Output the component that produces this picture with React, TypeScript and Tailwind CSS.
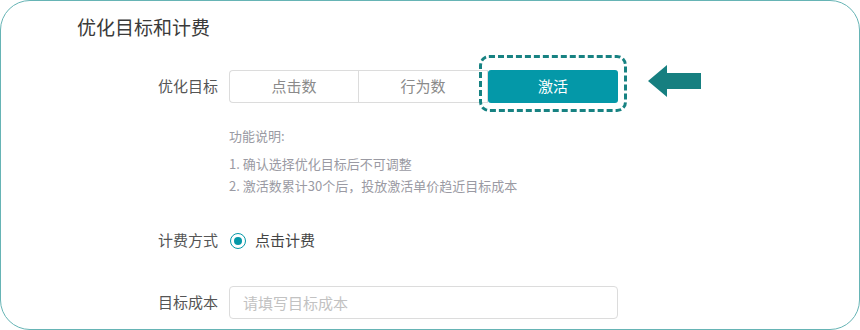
import React from "react";

const font = "font-['Noto_Sans_CJK_SC','Noto_Sans',sans-serif]";

function Segmented() {
  return (
    <div className="relative flex h-[33px] w-[389px] text-[15px]">
      <div className="flex w-[129px] items-center justify-center rounded-l-[4px] border border-r-0 border-[#dcdcdc] text-[#8a8a8a]">
        点击数
      </div>
      <div className="flex w-[130px] items-center justify-center border border-[#dcdcdc] text-[#8a8a8a]">
        行为数
      </div>
      <div className="relative flex w-[130px] items-center justify-center rounded-[3px] bg-[#0498a8] text-white">
        激活
        <div className="absolute -top-[15px] -bottom-[9px] -left-[9px] -right-[9px] rounded-[10px] border-[3px] border-dashed border-[#178282]" />
        <svg
          className="absolute left-[160px] top-[-5px]"
          width="54"
          height="34"
          viewBox="0 0 54 34"
        >
          <path d="M0 16 L19 0 L19 8 L53 8 L53 24 L19 24 L19 32 Z" fill="#167f80" />
        </svg>
      </div>
    </div>
  );
}

export default function App() {
  return (
    <div className={`${font} h-[330px] w-[860px] bg-white`}>
      <div className="h-[330px] w-[860px] rounded-[30px] border-[1.5px] border-[#66b4b5] pt-[14px] pl-[76px]">
        <h2 className="text-[19px] leading-[24px] text-[#3a3a3a]">优化目标和计费</h2>

        <div className="mt-[31px] flex items-center">
          <label className="w-[141px] text-right text-[15px] text-[#555]">优化目标</label>
          <div className="ml-[11px]">
            <Segmented />
          </div>
        </div>

        <div className="mt-[22px] ml-[152px] text-[13px] leading-[22px] text-[#9a9aa3]">
          <p>功能说明:</p>
          <p className="mt-[6px]">1. 确认选择优化目标后不可调整</p>
          <p>2. 激活数累计30个后，投放激活单价趋近目标成本</p>
        </div>

        <div className="mt-[27px] flex h-[33px] items-center">
          <label className="w-[141px] text-right text-[15px] text-[#555]">计费方式</label>
          <div className="ml-[12px] flex items-center gap-[9px] text-[15px] text-[#444]">
            <span className="flex h-[16px] w-[16px] items-center justify-center rounded-full border-[1.5px] border-[#0498a8]">
              <span className="h-[8px] w-[8px] rounded-full bg-[#0498a8]" />
            </span>
            点击计费
          </div>
        </div>

        <div className="mt-[29px] flex items-center">
          <label className="w-[141px] text-right text-[15px] text-[#555]">目标成本</label>
          <input
            className="ml-[11px] h-[33px] w-[389px] rounded-[4px] border border-[#dcdcdc] px-[13px] text-[15px] outline-none placeholder:text-[#c2c2c2]"
            placeholder="请填写目标成本"
          />
        </div>
      </div>
    </div>
  );
}
